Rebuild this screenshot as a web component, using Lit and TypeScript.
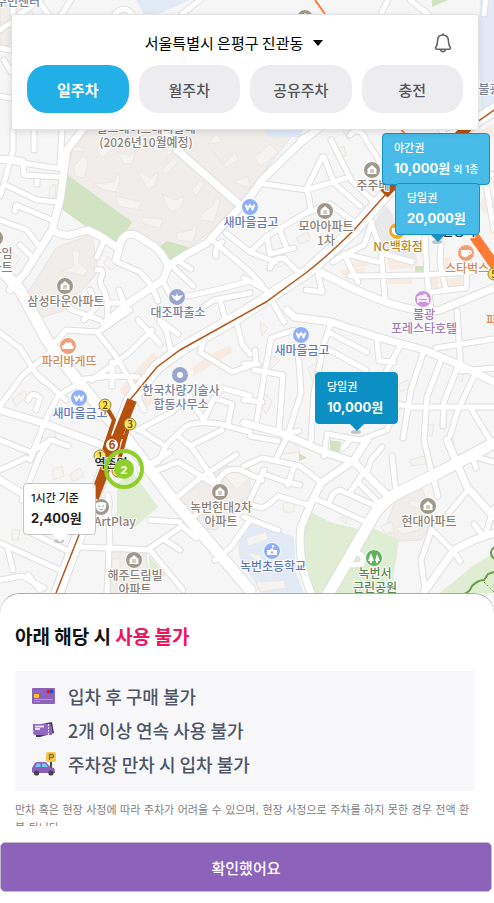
import { LitElement, html, svg, css } from "lit";
import { customElement, state } from "lit/decorators.js";
import { classMap } from "lit/directives/class-map.js";

type Poi = {
  kind: string;
  glyph: string;
  x: number;
  y: number;
  lines: string[];
};

// Street centre lines, grouped by carriageway width
const ROADS: Record<string, string[]> = {
  lane: [
    "M0 160L63 169", "M13 150L4 183L0 196", "M4 184L37 200L57 202", "M23 161L24 175L60 177M37 176V184",
    "M0 220L27 230L38 245", "M15 211L16 205L52 220", "M20 245L30 255", "M97 257L103 243",
    "M117 262L140 272L153 287", "M97 270Q104 268 102 276Q98 284 104 290L108 303L107 320",
    "M107 303H124L119 290", "M90 290L97 306L84 320", "M163 282L171 296", "M152 287L158 301", "M172 266L193 286", "M180 262L191 269",
    "M187 296Q210 292 250 281", "M195 312L214 300L250 293", "M220 300L226 322", "M212 240L250 272L262 285", "M216 256Q214 248 222 242",
    "M226 233L250 252L275 262", "M62 300L72 310L100 320",
    "M322 157L307 188L311 210L267 236L250 252", "M324 157L334 183L360 206", "M264 184L307 190L349 177",
    "M331 140L351 180L372 200", "M350 135Q360 125 366 140L380 162", "M300 140L320 128", "M267 237L270 254L294 248",
    "M270 268Q272 258 284 258L298 272", "M310 212L330 204L354 222", "M280 231L286 246", "M338 258L364 245L372 222",
    "M333 262L346 254L378 262", "M344 254L358 282", "M350 276L424 275L470 272L494 265", "M381 252L385 298",
    "M372 225L382 253L412 262", "M425 236L427 275L431 310", "M441 244L440 262L446 290", "M468 255L466 288L432 292",
    "M284 322L266 290L244 278", "M318 274L322 292L306 290",
    "M331 323L324 343L314 393L311 440", "M294 330L271 338L264 377L257 420", "M297 333L301 393L287 437L277 457",
    "M328 332L367 352M326 348L366 370", "M377 340L379 361L394 362", "M401 344L385 374", "M424 350L411 390L403 438",
    "M441 360L427 397L424 440", "M458 366L444 402L443 426", "M474 376L458 410L450 436", "M378 400L411 407H494",
    "M327 434L360 440L387 430L398 404", "M327 434L324 456", "M343 448L350 440", "M436 348L494 339M457 311L461 371L494 368",
    "M470 407L490 440", "M254 370L283 375L279 430", "M244 400L262 402", "M244 364L258 364M256 363L255 350",
    "M250 436L278 441", "M281 434L299 431", "M244 466L262 458L300 466L318 480", "M264 474L286 482L300 485", "M288 485L294 466", "M264 470L250 500",
    "M244 503L262 508Q270 504 278 496L308 505", "M244 517L278 530", "M316 499L368 523", "M330 501Q332 492 340 490L380 508",
    "M358 482L380 504", "M351 491L361 476", "M382 447L371 460L366 475", "M392 456L396 492", "M424 440L431 470L438 496",
    "M468 490L448 514", "M431 529L454 552L460 561", "M431 531L421 560L425 590", "M476 468L472 456L494 462", "M474 524L483 536M494 508L485 536",
    "M354 553Q366 553 362 564L352 565", "M0 333L20 348L37 375L45 382", "M0 406L23 375L53 350", "M35 372L66 400",
    "M54 344L66 330L98 332L130 310", "M97 332L115 355L130 380L144 410", "M77 380L110 376L138 377", "M92 380L130 352L152 330",
    "M59 394L44 423L30 460", "M28 400Q32 390 40 398L36 410", "M60 395Q72 386 84 383", "M112 362V386",
    "M160 320L178 334M138 320L160 344", "M0 440L30 452M30 452L52 440L68 446", "M50 440L40 455L22 500", "M0 470L26 458",
    "M140 430L165 446L184 428Q192 420 220 424L250 432", "M138 430L172 412L190 396", "M166 446L158 462L140 468", "M190 400L204 420L214 398L232 404",
    "M215 398L222 388L250 396", "M232 404L228 424", "M172 355L166 330L160 322", "M205 338L200 352L232 372L250 366", "M236 320L242 344L250 354",
    "M190 445L214 480M178 436L190 446L222 430", "M158 470L178 462L214 484", "M176 498L200 478L236 455", "M216 485Q224 466 240 470L262 480", "M140 470L170 452",
    "M0 543L60 570M26 530L66 550L34 534", "M0 580L22 576L44 588M8 550L13 570", "M77 547L110 548L150 550", "M109 548L107 593", "M150 550L183 590M165 540L180 550",
    "M150 548L182 526L196 538M150 520L180 522", "M190 520L206 506", "M215 560L230 548L250 520",
    "M92 520L103 516Q112 512 108 495L110 548",
    "M40 590L28 575M60 593V580", "M13 14V2M20 14L40 0M0 30L12 22M0 48L10 50M0 96L10 98M4 60L11 72",
    "M48 14L38 0M62 14L72 -2M115 14Q124 4 132 14M182 14L200 0M486 -2L484 14M410 0L428 14M382 12L388 0",
    "M13 150V130M34 150V130M60 165L62 130M0 158L20 160", "M440 128L462 160L494 176M486 184L494 230",
  ],
  street: [
    "M85 126L67 150L60 200L52 230L25 273L10 290", "M52 230Q62 236 70 235L88 230L100 236L118 248",
    "M116 260L121 241Q126 232 136 235L155 247Q165 256 168 267L163 280L130 302L104 324",
    "M168 266L187 254L207 243L222 226L250 197L262 180L300 143L322 126", "M177 150L242 207", "M162 132L180 150",
    "M287 310L294 317L331 322L377 337L424 350L460 365L494 382",
    "M244 423L281 433L327 453L354 462L387 495", "M367 440L354 460L321 483L311 503L301 527Q297 560 311 593",
    "M447 440L467 487L494 517", "M494 533L474 540L454 550L424 592", "M0 410L43 423L110 448", "M0 480L30 498",
    "M320 272L354 289Q410 315 440 310L494 288",
  ],
  avenue: [
    "M-4 264L20 290L47 340L77 380L110 420L130 443L173 500L250 590", "M494 443L444 470L394 495Q376 508 370 522L327 596",
  ],
  trunk: [
    "M500 106L430 150L386 194L354 230L307 272L244 313L180 350L157 367L130 400L97 490L77 540L55 600",
  ],
};

// Quiet ground cover: [class, polygon points]
const AREAS: [string, string][] = [
  ["estate", "72,152 92,126 300,126 262,174 220,224 186,250 160,244 128,230 66,172"],
  ["estate", "56,248 92,234 98,272 66,310 40,318 27,294"],
  ["estate", "398,494 422,488 434,520 421,540 398,541 384,530"],
  ["estate", "176,500 222,466 250,468 250,500 216,530 196,528"],
  ["estate", "110,552 146,552 150,593 108,593"],
  ["estate", "0,0 20,0 44,24 0,50"],
  ["park", "65,173 132,222 118,245 95,233 60,208"],
  ["park", "167,241 188,247 187,252 170,264 158,248"],
  ["meadow", "117,483 133,473 158,507 135,527 117,520"],
  ["meadow", "149,556 166,576 150,578"],
  ["meadow", "307,510 330,522 362,530 324,593 311,593 299,563 301,530"],
  ["meadow", "372,528 399,540 391,593 331,593"],
  ["meadow", "494,553 474,565 440,593 494,593"],
  ["park", "330,440 341,442 339,454 330,452"],
  ["park", "415,266 424,266 424,272 415,272"],
  ["park", "432,0 448,0 432,7"],
  ["park", "299,453 307,458 299,461"],
  ["school", "244,525 262,524 294,537 296,573 304,593 262,593 240,560 238,545"],
  ["school", "262,126 305,126 300,137 270,138"],
  ["school", "136,0 190,0 158,14 144,14"],
  ["school", "480,0 494,0 494,110 482,118 478,40"],
  ["mall", "374,222 386,205 400,226 418,260 384,250"],
];

const HOUSES = [
  "74,166 84,156 88,162 84,178 75,176", "93,184 114,182 118,172 120,180 116,192 104,190", "116,196 142,202 139,210 118,206",
  "141,217 163,219 160,228 144,224", "137,170 150,178 158,172 156,184 148,190", "162,194 176,200 184,196 182,206 174,212 168,208",
  "176,233 192,230 194,224 197,228 193,242 178,240", "201,214 212,206 217,196 220,202 214,222 202,220", "117,152 130,156 136,150 132,164 124,164",
  "212,150 224,164 236,152 238,160 226,168", "192,190 200,180 204,184 196,196", "162,170 174,158 178,162 166,174", "233,182 248,176 250,188",
  "60,272 74,266 72,248 80,252 78,262 88,270 84,276 70,272", "50,186 56,184 55,198 49,198", "108,256 118,264 112,270 104,264", "12,252 20,258 14,268 8,262",
  "62,150 80,146 84,152", "96,150 108,140 112,148 102,158", "166,160 168,148 176,144", "208,144 216,134 222,142", "254,158 270,144 278,152 262,166",
  "380,526 392,522 394,532 386,534", "410,500 420,502 418,508 410,506", "396,528 414,520 420,530 402,534",
  "246,538 266,532 268,540 248,546", "256,582 284,580 286,588 260,592", "246,552 262,556 260,564", "224,474 246,466 252,476 236,490", "200,508 210,502 212,512",
  "260,366 274,356 280,360 268,372", "308,368 318,362 322,382 312,380", "260,402 266,394 272,402 266,414", "399,384 408,380 410,388 400,392", "454,374 464,370 462,382",
  "280,442 294,440 300,452 284,454", "425,426 434,424 432,436 424,434", "446,440 452,434 454,444", "410,460 424,456 426,464 412,466",
  "283,504 294,500 294,512 284,512", "340,518 348,516 346,524", "52,470 62,466 64,476 54,480", "70,474 80,468 84,476 72,482", "40,430 54,426 56,438 42,438",
  "12,400 24,390 28,396 16,406", "12,530 20,530 18,540 12,540", "18,16 30,10 36,20 26,26", "272,262 284,254 288,262 278,268", "296,238 308,232 310,240 300,244",
  "112,356 118,360 114,368", "334,150 344,146 346,156 338,158", "342,128 350,130 348,140", "260,322 268,328 262,336", "112,560 120,558 120,584 112,584",
];

const SHOPS = [
  "120,390 138,368 154,352 158,358 140,380 126,398", "192,368 214,352 230,346 233,352 214,364 194,376", "140,400 154,392 156,400 144,410",
  "352,262 372,258 374,264 356,268", "340,270 364,268 366,276 344,278", "386,256 418,258 418,266 390,270", "388,278 412,276 412,284 388,284",
  "444,258 452,256 450,272 444,272", "428,272 440,270 438,288 430,288", "370,208 382,196 390,200 376,216", "478,206 486,194 494,204 486,214",
  "448,280 462,276 462,284 450,288", "404,264 414,262 412,272", "478,132 492,124 494,136 480,142",
];

const POIS: Poi[] = [
  { kind: "bank", glyph: "won", x: 250, y: 207, lines: ["새마을금고"] },
  { kind: "bank", glyph: "won", x: 301, y: 335, lines: ["새마을금고"] },
  { kind: "bank", glyph: "won", x: 79, y: 398, lines: ["새마을금고"] },
  { kind: "home", glyph: "house", x: 325, y: 211, lines: ["모아아파트", "1차"] },
  { kind: "home", glyph: "house", x: 372, y: 170, lines: ["주주베"] },
  { kind: "home", glyph: "house", x: 65, y: 286, lines: ["삼성타운아파트"] },
  { kind: "home", glyph: "house", x: 428, y: 506, lines: ["현대아파트"] },
  { kind: "home", glyph: "house", x: 220, y: 492, lines: ["녹번현대2차", "아파트"] },
  { kind: "home", glyph: "house", x: 134, y: 560, lines: ["해주드림빌", "아파트"] },
  { kind: "home", glyph: "house", x: -5, y: 238, lines: ["일하임", "아파트"] },
  { kind: "home", glyph: "face", x: 101, y: 507, lines: [] },
  { kind: "home", glyph: "house", x: 305, y: 18, lines: [] },
  { kind: "office", glyph: "bird", x: 177, y: 297, lines: ["대조파출소"] },
  { kind: "office", glyph: "dot", x: 180, y: 375, lines: ["한국차량기술사", "합동사무소"] },
  { kind: "food", glyph: "bread", x: 68, y: 346, lines: ["파리바게뜨"] },
  { kind: "food", glyph: "cup", x: 466, y: 253, lines: ["스타벅스"] },
  { kind: "hotel", glyph: "bed", x: 423, y: 299, lines: ["불광", "포레스타호텔"] },
  { kind: "store", glyph: "cup", x: 397, y: 231, lines: ["NC백화점"] },
  { kind: "bank", glyph: "school", x: 272, y: 551, lines: ["녹번초등학교"] },
  { kind: "green", glyph: "trees", x: 374, y: 558, lines: ["녹번서", "근린공원"] },
];

const GLYPHS: Record<string, unknown> = {
  won: svg`<path class="line" d="M-4.5 -2.5L-2.5 3L0 -2.5L2.5 3L4.5 -2.5M-5 -0.5H5" />`,
  house: svg`<path class="solid" d="M0 -5L4.5 -1V4H-4.5V-1Z" /><path class="mark" d="M-2 0H2M-2 2H2" />`,
  face: svg`<path class="solid" d="M-5 -4Q0 -6 5 -4Q6 4 0 5Q-6 4 -5 -4Z" /><path class="mark" d="M-3 -1H-1M1 -1H3M-2 2Q0 4 2 2" />`,
  bird: svg`<path class="solid" d="M-6 -2L-1 -1L0 -4L1 -1L6 -2L3 2L0 4L-3 2Z" />`,
  dot: svg`<circle class="solid" r="3" />`,
  bread: svg`<path class="solid" d="M-6 2Q-7 -1 -4 -1Q-3 -5 0 -3Q4 -5 4 -1Q7 0 5 3H-5Z" />`,
  cup: svg`<path class="solid" d="M-5 -3H3V1Q2 4 -1 4Q-4 4 -5 1Z" /><path class="line" d="M3 -2Q6 -2 5 0Q5 1 3 1" />`,
  bed: svg`<path class="line" d="M-5 -3V4M-5 2H5V-1H-5M5 4V0M-3 -1V-3H0V-1M1 -1V-4H3V-1" />`,
  school: svg`<path class="solid" d="M-5 -1H-2L0 -3L2 -1H5V4H-5ZM0 -6L3 -5L0 -3Z" /><circle class="dot" cy="1.5" r="1.2" />`,
  trees: svg`<path class="solid" d="M-3 -5L0 3H-6ZM3 -4L6 3H1ZM-4 3H-2V5H-4ZM2 3H4V5H2Z" />`,
};

@customElement("parking-map")
class ParkingMap extends LitElement {
  static styles = css`
    :host { display: block; position: relative; overflow: hidden; background: #f6f6f6; }
    svg { display: block; overflow: visible; }
    text { font-family: "Noto Sans CJK KR", sans-serif; font-size: 12px; font-weight: 500; text-anchor: middle; paint-order: stroke; stroke: #fff; stroke-width: 2px; stroke-linejoin: round; }
    .estate { fill: #f0edeb; stroke: #e9e4e1; }
    .park { fill: #d1e3c0; }
    .meadow { fill: #dfedd3; }
    .school { fill: #e2ebf5; }
    .mall { fill: #e9e9eb; }
    .house { fill: #f5f4f1; stroke: #ebe7e2; }
    .shop { fill: #f8ebe1; }
    .casing, .fill { fill: none; stroke-linejoin: round; stroke-linecap: round; }
    .casing { stroke: #dfdfdf; }
    .fill { stroke: #fff; }
    .casing.lane { stroke-width: 7px; }
    .fill.lane { stroke-width: 5px; }
    .casing.street { stroke-width: 9px; }
    .fill.street { stroke-width: 7px; }
    .casing.avenue { stroke-width: 13px; }
    .fill.avenue { stroke-width: 11px; }
    .casing.trunk { stroke-width: 14px; }
    .fill.trunk { stroke-width: 12px; }
    .rail { fill: none; stroke: #b5561d; stroke-width: 1.5px; }
    .platform { fill: none; stroke: #b5500f; stroke-width: 10px; }
    .passage { fill: none; stroke: #b5500f; stroke-width: 4px; }
    .orange-line { fill: none; stroke: #ff7a35; stroke-width: 2px; }
    .orange-platform { fill: none; stroke: #ff7a35; stroke-width: 10px; }
    .trail { fill: none; stroke: #6b9c3f; stroke-width: 2px; }
    .dots { fill: none; stroke: #6b9c3f; stroke-width: 1px; stroke-dasharray: 2 2; }
    .exit { fill: #ffe14d; stroke: #8c8455; stroke-width: 1px; }
    .exit-no { fill: #554d20; stroke: none; font-size: 10px; }
    .line-badge { fill: #fff; stroke: #b5500f; stroke-width: 2px; }
    .line-no { fill: #b5500f; stroke: none; font-family: "Liberation Sans", sans-serif; font-weight: 700; }
    .station { fill: #333; font-weight: 700; }
    .cluster-ring { fill: none; stroke: #8fcf2a; stroke-width: 4px; }
    .cluster-core { fill: #8fcf2a; }
    .cluster-no { fill: #fff; stroke: none; font-family: Inter, sans-serif; font-weight: 700; font-size: 11px; }
    .shadow { fill: #c4c4c4; }
    .disc { stroke: #fff; stroke-width: 1px; }
    .solid { fill: #fff; }
    .line { fill: none; stroke: #fff; stroke-width: 1.5px; stroke-linejoin: round; }
    .mark { fill: none; stroke: #a39b8f; stroke-width: 1px; }
    .dot { fill: #8fb0f7; }
    .bank .disc { fill: #8fb0f7; }
    .bank text { fill: #5f78bd; }
    .home .disc { fill: #a1988c; }
    .home text, text.home { fill: #8a7f76; }
    .office .disc { fill: #9aa6cb; }
    .office text, text.office { fill: #78819b; }
    .food .disc { fill: #f09f78; }
    .food text, text.food { fill: #d38a55; }
    .hotel .disc { fill: #cd95db; }
    .hotel text { fill: #a27bb3; }
    .store .disc { fill: #eead1f; }
    .store text { fill: #b38c2a; }
    .green .disc { fill: #62b15c; }
    .green text { fill: #508a50; }
    .pin {
      position: absolute; box-sizing: border-box; margin: 0; padding: 0 11px 2px; height: 52px;
      border: 1px solid; border-radius: 4px; text-align: left; white-space: nowrap; cursor: pointer;
      font: 500 11px/20px Inter, "Noto Sans CJK KR", sans-serif;
    }
    .pin span { display: block; }
    .pin strong { font-size: 13px; font-weight: 700; }
    .pin small { font-size: 10px; font-weight: 500; }
    .pin::after {
      content: ""; position: absolute; left: 50%; top: 100%; margin-left: -8px;
      border: 8px solid transparent; border-bottom-width: 0; border-top-color: inherit;
    }
    .pin.light { background: #48bbe8; border-color: #1593c4; color: #fff; }
    .pin.deep { background: #0c90c4; border-color: #0c90c4; color: #fff; }
    .pin.plain { background: #fff; border-color: #c6c6c6; color: #222; padding-left: 7px; }
    .pin.plain::after { border-top-color: #fff; }
    .pin.night { left: 382px; top: 133px; width: 108px; }
    .pin.day { left: 395px; top: 183px; width: 85px; }
    .pin.center { left: 315px; top: 372px; width: 83px; }
    .pin.hourly { left: 23px; top: 483px; width: 73px; }
  `;

  private poi(p: Poi) {
    return svg`<g class=${p.kind} transform="translate(${p.x} ${p.y})">
      <circle class="disc" r="8.5" />${GLYPHS[p.glyph]}
      ${p.lines.map((line, i) => svg`<text x="1" y=${20 + i * 14}>${line}</text>`)}
    </g>`;
  }

  private exit(n: number, x: number, y: number) {
    return svg`<circle class="exit" cx=${x} cy=${y} r="6" /><text class="exit-no" x=${x} y=${y + 4}>${n}</text>`;
  }

  render() {
    const roads = Object.entries(ROADS);
    return html`
      <svg width="494" height="600" role="img" aria-label="은평구 주차 지도">
        ${AREAS.map(([kind, points]) => svg`<polygon class=${kind} points=${points} />`)}
        ${SHOPS.map((points) => svg`<polygon class="shop" points=${points} />`)}
        ${HOUSES.map((points) => svg`<polygon class="house" points=${points} />`)}
        ${roads.map(([size, paths]) => svg`<path class="casing ${size}" d=${paths.join("")} />`)}
        ${roads.map(([size, paths]) => svg`<path class="fill ${size}" d=${paths.join("")} />`)}
        <path class="rail" d="M500 106L440 148L386 194L354 230Q330 254 307 272L266 302L180 350L157 367L130 400L97 490L77 540L56 593" />
        <path class="platform" d="M472 122L448 148M398 180L384 194" />
        <path class="orange-line" d="M315 0L325 14M401 129L405 134" />
        <path class="orange-platform" d="M474 236L498 270" />
        <path class="trail" d="M464 594Q470 592 472 586Q478 580 484 580L488 574L494 572" />
        <path class="dots" d="M484 582L494 592" />
        <circle class="trail" cx="497" cy="553" r="6" />
        ${POIS.map((p) => this.poi(p))}
        <text class="home" x="146" y="133">힐스테이트메디알레</text>
        <text class="home" x="146" y="147">(2026년10월예정)</text>
        <text class="home" x="102" y="526">KingArtPlay</text>
        <text class="office" x="18" y="6">주민센터</text>
        <text class="office" x="495" y="94">불광천</text>
        <text class="food" x="497" y="325">파리</text>
        <path class="platform" d="M132 400L116 440L94 498" />
        <path class="platform" d="M113 436L104 466" />
        <path class="passage" d="M107 408L114 420L104 450M128 428L119 460M120 437H126" />
        ${this.exit(2, 105, 405)} ${this.exit(3, 130, 424)} ${this.exit(1, 100, 456)} ${this.exit(5, 494, 274)}
        <circle class="exit" cx="118" cy="471" r="6" />
        <circle class="line-badge" cx="112" cy="445" r="7" />
        <text class="line-no" x="112" y="449">6</text>
        <text class="station" x="111" y="468">역촌역</text>
        <text class="station" x="459" y="236">불광역</text>
        <circle class="cluster-ring" cx="124" cy="469" r="18" />
        <circle class="cluster-core" cx="124" cy="469" r="10" />
        <text class="cluster-no" x="124" y="474">2</text>
        <ellipse class="shadow" cx="59" cy="541" rx="5" ry="2" />
        <ellipse class="shadow" cx="356" cy="432" rx="5" ry="2" />
        <ellipse class="shadow" cx="437" cy="242" rx="5" ry="2" />
      </svg>
      <button class="pin light night"><span>야간권</span><strong>10,000원</strong> <small>외 1종</small></button>
      <button class="pin light day"><span>당일권</span><strong>20,000원</strong></button>
      <button class="pin deep center"><span>당일권</span><strong>10,000원</strong></button>
      <button class="pin plain hourly"><span>1시간 기준</span><strong>2,400원</strong></button>
    `;
  }
}

@customElement("app-root")
class AppRoot extends LitElement {
  @state() private tab = "일주차";

  static styles = css`
    :host { display: block; font-family: "Noto Sans CJK KR", sans-serif; color: #111; }
    button { font-family: inherit; cursor: pointer; }
    .screen { position: relative; display: flex; flex-direction: column; justify-content: space-between; min-height: 100vh; }
    parking-map { position: absolute; inset: 0; }
    .top {
      position: relative; margin: 14px 15px 0 11px; padding: 16px 15px; background: #fff;
      border: 1px solid #e3e3e3; border-radius: 3px; box-shadow: 0 2px 6px rgba(0, 0, 0, 0.12);
    }
    .bar { display: flex; align-items: center; margin-bottom: 11px; padding: 0 10px 0 8px; }
    .place { flex: 1; display: flex; justify-content: center; align-items: center; gap: 10px; padding: 0; border: 0; background: none; font-size: 15px; line-height: 23px; color: #000; }
    .bell { padding: 0; border: 0; background: none; height: 23px; }
    .bell svg, .place svg { display: block; }
    .tabs { display: grid; grid-template-columns: repeat(4, 1fr); gap: 10px; }
    .tab { height: 48px; padding: 0; border: 0; border-radius: 20px; background: #ededf0; color: #555; font-size: 15px; font-weight: 500; }
    .tab.active { background: #22aee6; color: #fff; font-weight: 700; }
    .sheet { position: relative; padding: 28px 2px 11px 0; background: #fff; border-top: 1px solid #aaa; border-radius: 20px 20px 0 0; }
    .body { padding: 0 17px 0 15px; }
    h1 { margin: 0 0 21px; font-size: 19px; line-height: 28px; font-weight: 700; }
    h1 em { font-style: normal; color: #f0145a; }
    .rules { margin: 0; padding: 8px 17px 10px; list-style: none; background: #f8f8fb; }
    .rules li { display: flex; align-items: center; gap: 12px; font-size: 18px; line-height: 34px; font-weight: 500; color: #4d5566; }
    .note { margin: 11px 0 16px; height: 24px; overflow: hidden; font-family: "DejaVu Sans", "Noto Sans CJK KR", sans-serif; font-size: 11px; line-height: 18px; color: #808080; }
    .confirm { display: block; width: 100%; height: 50px; border: 1px solid #c4bccb; border-radius: 5px; background: #8c62ba; color: #fff; font-size: 15px; font-weight: 500; }
  `;

  private tabButton(label: string) {
    const active = label === this.tab;
    return html`<button class=${classMap({ tab: true, active })} aria-pressed=${active} @click=${() => (this.tab = label)}>${label}</button>`;
  }

  render() {
    return html`
      <div class="screen">
        <parking-map></parking-map>
        <header class="top">
          <div class="bar">
            <button class="place">
              서울특별시 은평구 진관동
              <svg width="10" height="6" viewBox="0 0 10 6" aria-hidden="true"><path d="M0 0H10L5 6Z" /></svg>
            </button>
            <button class="bell" aria-label="알림">
              <svg width="20" height="22" viewBox="0 0 20 22" fill="none" stroke="#666" stroke-width="1.6" stroke-linejoin="round">
                <path d="M10 3C6.6 3 4.6 5.4 4.6 8.6C4.6 13 3.8 14 2.6 15.6Q2.2 17 3.6 17.2H16.4Q17.8 17 17.4 15.6C16.2 14 15.4 13 15.4 8.6C15.4 5.4 13.4 3 10 3Z" />
                <path d="M9 2.4H11M7.2 18.2Q10 21 12.8 18.2" />
              </svg>
            </button>
          </div>
          <nav class="tabs">${["일주차", "월주차", "공유주차", "충전"].map((t) => this.tabButton(t))}</nav>
        </header>
        <section class="sheet">
          <div class="body">
            <h1>아래 해당 시 <em>사용 불가</em></h1>
            <ul class="rules">
              <li>
                <svg width="24" height="24" viewBox="0 0 24 24" aria-hidden="true">
                  <rect y="4" width="23" height="16" rx="1" fill="#8c62ba" />
                  <rect x="2" y="10" width="5" height="4" rx="1" fill="#ffc800" />
                  <circle cx="19.5" cy="7.5" r="2" fill="#1552c8" /><circle cx="16.5" cy="7.5" r="2" fill="#f01428" />
                  <path d="M2 15.5H21M2 17.5H8" stroke="#ad96c8" />
                </svg>
                입차 후 구매 불가
              </li>
              <li>
                <svg width="24" height="24" viewBox="0 0 24 24" aria-hidden="true">
                  <path d="M4 7L20 4L22 15L8 19L4 19Z" fill="#4c3868" />
                  <path d="M1 6H19Q18 8 20 9V17H3Q1 17 1 15Q2 13 1 11Z" fill="#9068c0" />
                  <path d="M3 8.5H12M3 11H8" stroke="#e8def5" stroke-width="2" /><path d="M16.5 6V17" stroke="#e8def5" stroke-dasharray="2 1" />
                </svg>
                2개 이상 연속 사용 불가
              </li>
              <li>
                <svg width="24" height="24" viewBox="0 0 24 24" aria-hidden="true">
                  <path d="M19 8V22" stroke="#444" stroke-width="2" />
                  <rect x="14" y="0" width="10" height="10" rx="2" fill="#f5c842" />
                  <path d="M17.5 8V2.5H19.5Q21.5 2.5 21.5 4T19.5 5.5H17.5" fill="none" stroke="#8a6a55" stroke-width="1.3" />
                  <path d="M0 20V16L3 11Q4 10 6 10H14L18 15L22 16Q23 17 23 21H1Z" fill="#8c5cba" />
                  <path d="M3 15L5 11.5H8.5V15ZM10 11.5H13.5L16 15H10Z" fill="#70cdf5" />
                  <circle cx="4.5" cy="21" r="2.6" fill="#444" /><circle cx="19" cy="21" r="2.6" fill="#444" />
                </svg>
                주차장 만차 시 입차 불가
              </li>
            </ul>
            <p class="note">만차 혹은 현장 사정에 따라 주차가 어려울 수 있으며, 현장 사정으로 주차를 하지 못한 경우 전액 환불 됩니다.</p>
          </div>
          <button class="confirm">확인했어요</button>
        </section>
      </div>
    `;
  }
}
